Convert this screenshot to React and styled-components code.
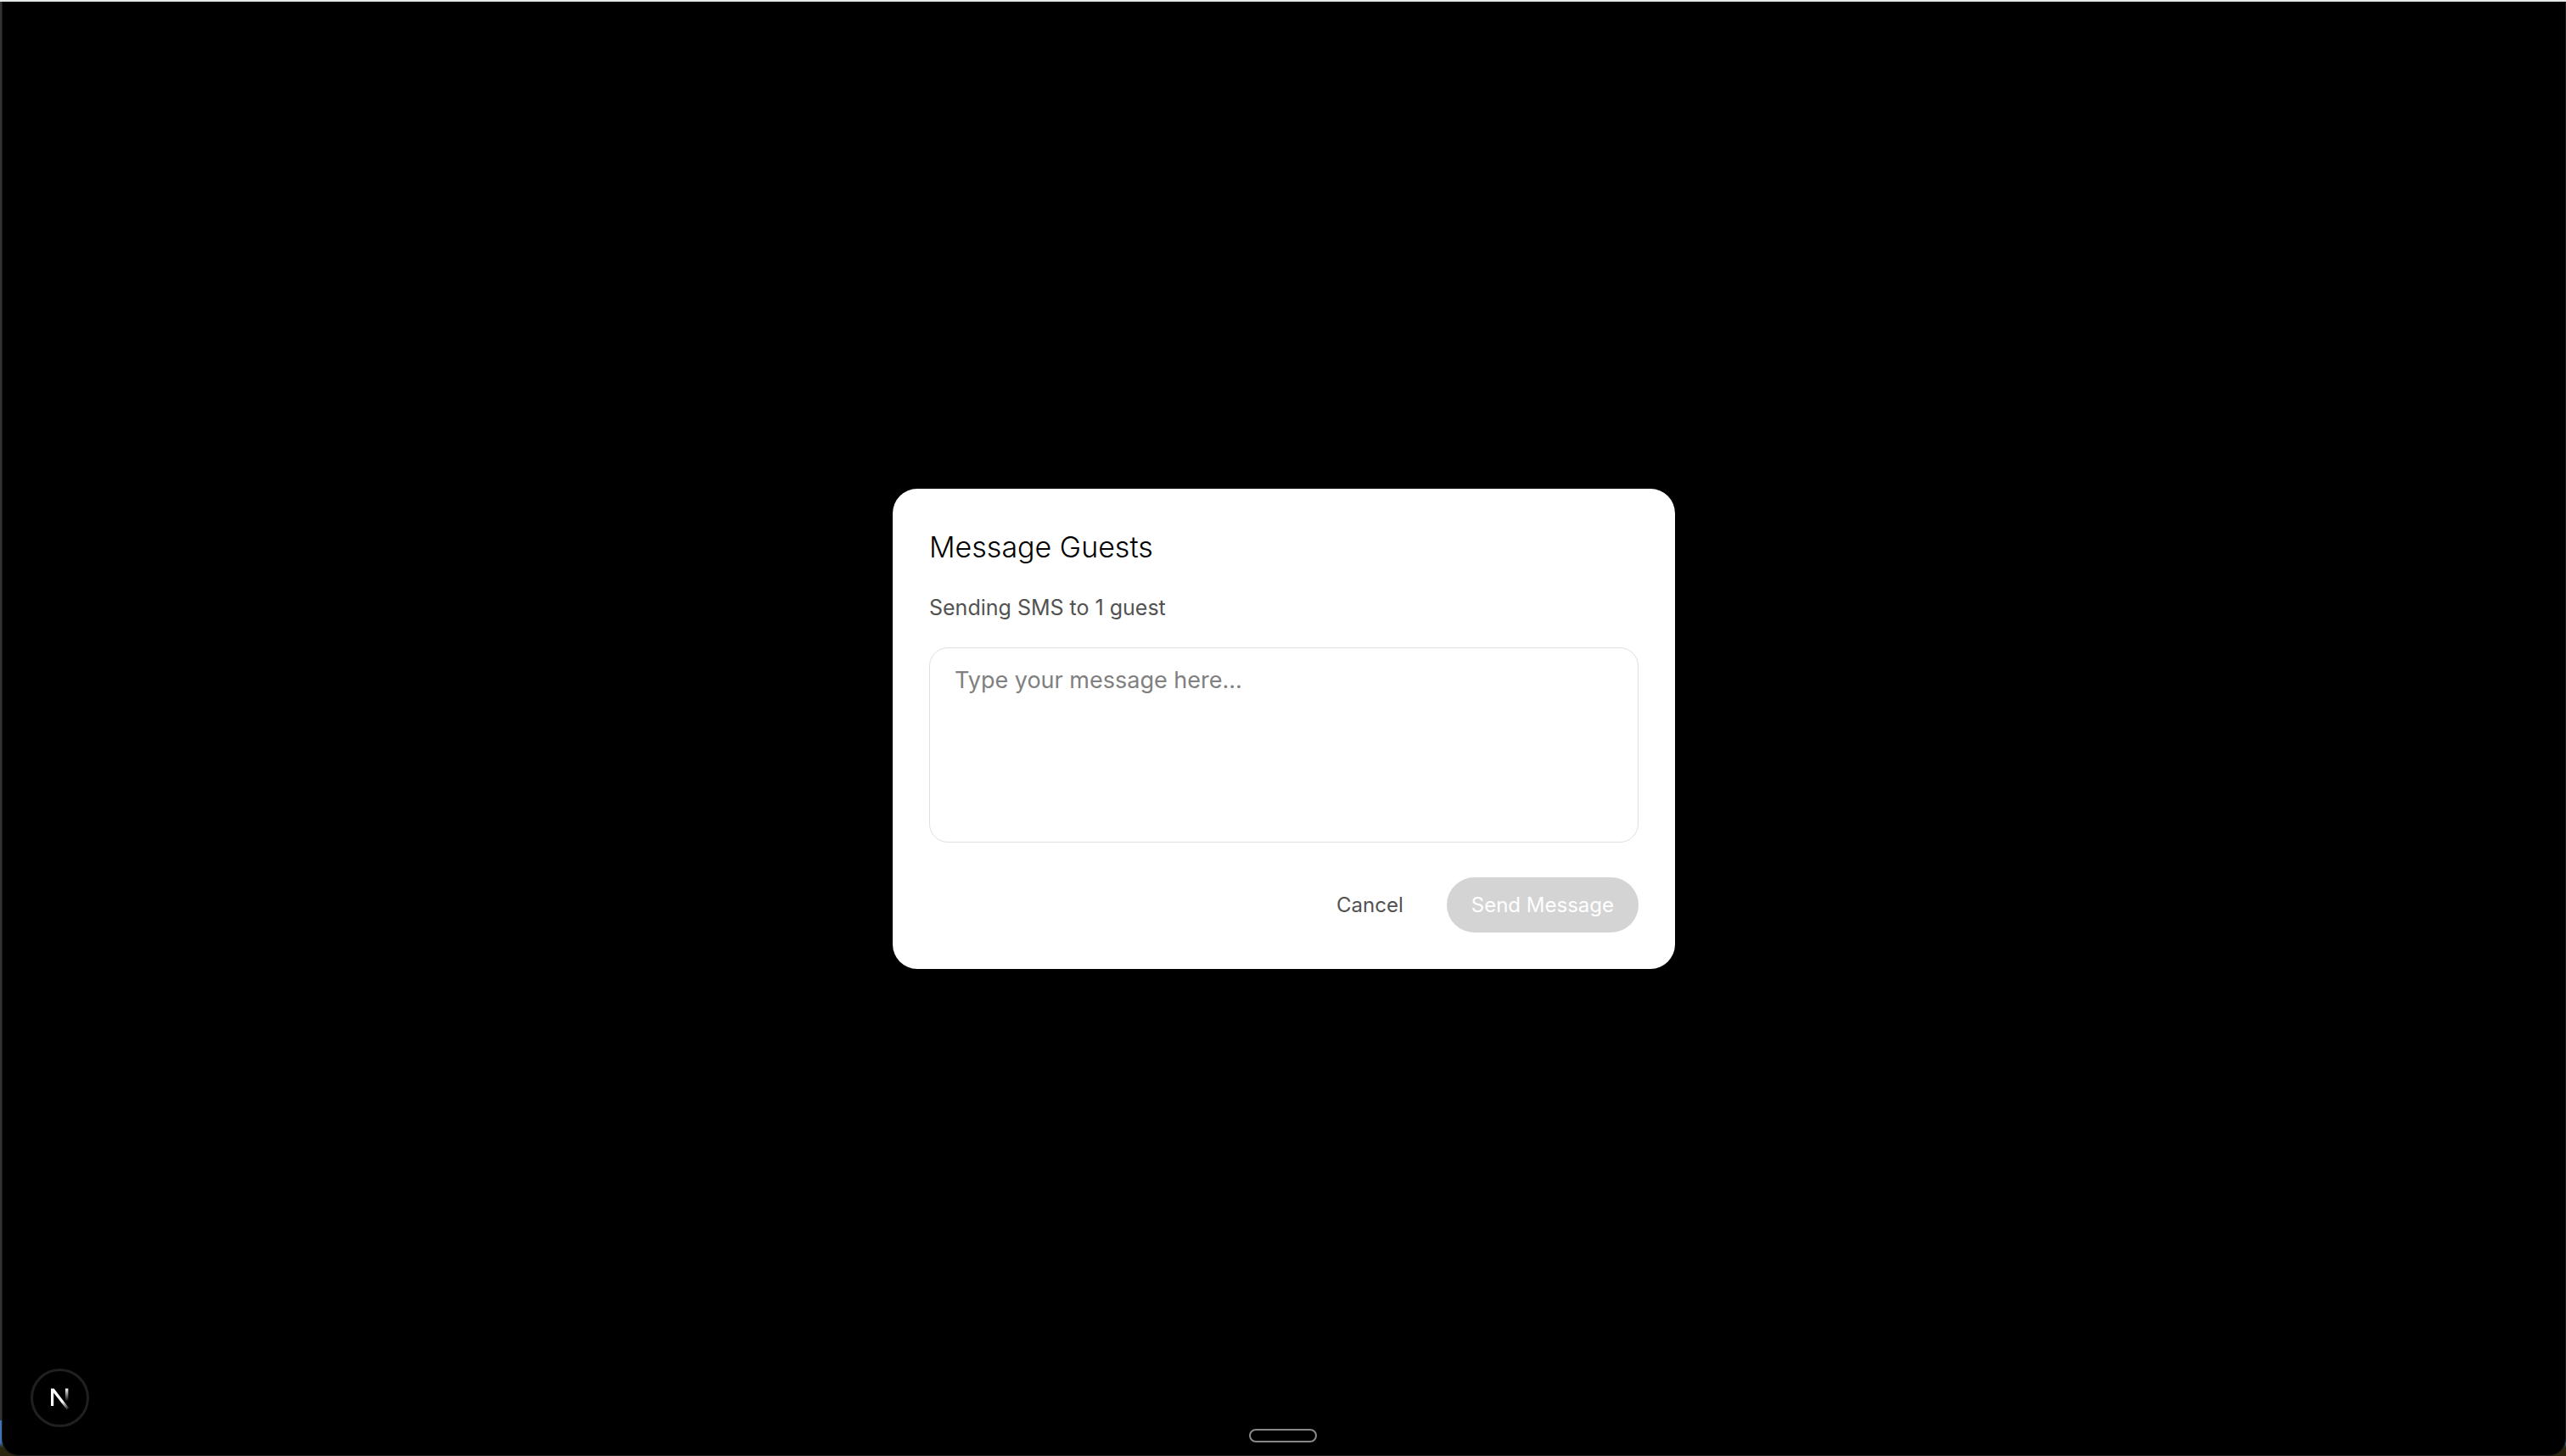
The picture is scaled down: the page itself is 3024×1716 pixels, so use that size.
import React, { useState } from "react";
import styled, { createGlobalStyle } from "styled-components";

const GlobalStyle = createGlobalStyle`
  * { box-sizing: border-box; }
  body {
    margin: 0;
    background: #1b1708;
    font-family: Inter, "Liberation Sans", sans-serif;
  }
`;

const Desktop = styled.div`
  display: flex;
  min-height: 100vh;
  border-top: 2px solid #e6e9ea;
  background: linear-gradient(to bottom, #333333 calc(100% - 42px), #3f73b5 calc(100% - 42px), #3f73b5 calc(100% - 16px), #2b240f calc(100% - 10px));
`;

const Page = styled.main`
  position: relative;
  flex: 1;
  display: flex;
  align-items: center;
  justify-content: center;
  margin-left: 2px;
  border: 1px solid #1c1c1c;
  border-top: 0;
  border-radius: 0 0 20px 20px;
  background: #000000;
`;

const Dialog = styled.form`
  display: flex;
  flex-direction: column;
  width: 100%;
  max-width: 922px;
  padding: 43px;
  border-radius: 29px;
  background: #ffffff;
`;

const Title = styled.h2`
  margin: 0;
  color: #000000;
  font-size: 34px;
  font-weight: 300;
  line-height: 51px;
`;

const Summary = styled.label`
  margin: 28px 0 29px;
  color: #525252;
  font-size: 25px;
  line-height: 36px;
`;

const MessageBox = styled.textarea`
  display: block;
  width: 100%;
  height: 230px;
  padding: 16px 29px;
  border: 1px solid #e0e0e0;
  border-radius: 22px;
  outline: none;
  background: #ffffff;
  color: #000000;
  font: 400 27px/44px Inter, "Liberation Sans", sans-serif;
  resize: none;

  &::placeholder { color: #808080; opacity: 1; }
`;

const Actions = styled.div`
  display: flex;
  justify-content: flex-end;
  gap: 22px;
  margin-top: 41px;
`;

const Button = styled.button`
  padding: 14px 29px;
  border: 0;
  border-radius: 36px;
  background: ${({ $filled }) => ($filled ? "#d4d4d4" : "transparent")};
  color: ${({ $filled }) => ($filled ? "#ffffff" : "#525252")};
  font: 400 24px/37px Inter, "Liberation Sans", sans-serif;
`;

const DevBadge = styled.button`
  position: absolute;
  left: 33px;
  bottom: 33px;
  width: 69px;
  height: 69px;
  padding: 0;
  border: 3px solid #202020;
  border-radius: 50%;
  background: #000000;

  svg { display: block; width: 100%; height: 100%; }
`;

const Handle = styled.div`
  position: absolute;
  bottom: 15px;
  left: 50%;
  width: 80px;
  height: 16px;
  margin-left: -41px;
  border: 2px solid #888888;
  border-radius: 8px;
`;

function NextMark() {
  return (
    <svg viewBox="0 0 63 63" aria-hidden="true">
      <defs>
        <linearGradient id="diag" gradientUnits="userSpaceOnUse" x1="34" y1="36" x2="42" y2="46">
          <stop stopColor="#fff" />
          <stop offset="1" stopColor="#fff" stopOpacity="0" />
        </linearGradient>
        <linearGradient id="stem" x1="0" y1="0" x2="0" y2="1">
          <stop stopColor="#fff" />
          <stop offset="1" stopColor="#fff" stopOpacity="0" />
        </linearGradient>
      </defs>
      <path d="M21 20.500h3.600L42.300 43.500 39.800 45.500 24.200 25.500V41H21z" fill="url(#diag)" />
      <rect x="38" y="20.500" width="3.400" height="15" fill="url(#stem)" />
    </svg>
  );
}

export default function App() {
  const [message, setMessage] = useState("");
  return (
    <>
      <GlobalStyle />
      <Desktop>
        <Page>
          <Dialog onSubmit={(e) => e.preventDefault()}>
            <Title>Message Guests</Title>
            <Summary htmlFor="message">Sending SMS to 1 guest</Summary>
            <MessageBox
              id="message"
              placeholder="Type your message here..."
              value={message}
              onChange={(e) => setMessage(e.target.value)}
            />
            <Actions>
              <Button type="button">Cancel</Button>
              <Button type="submit" $filled disabled={!message}>Send Message</Button>
            </Actions>
          </Dialog>
          <DevBadge type="button" aria-label="Open Next.js Dev Tools"><NextMark /></DevBadge>
          <Handle />
        </Page>
      </Desktop>
    </>
  );
}
